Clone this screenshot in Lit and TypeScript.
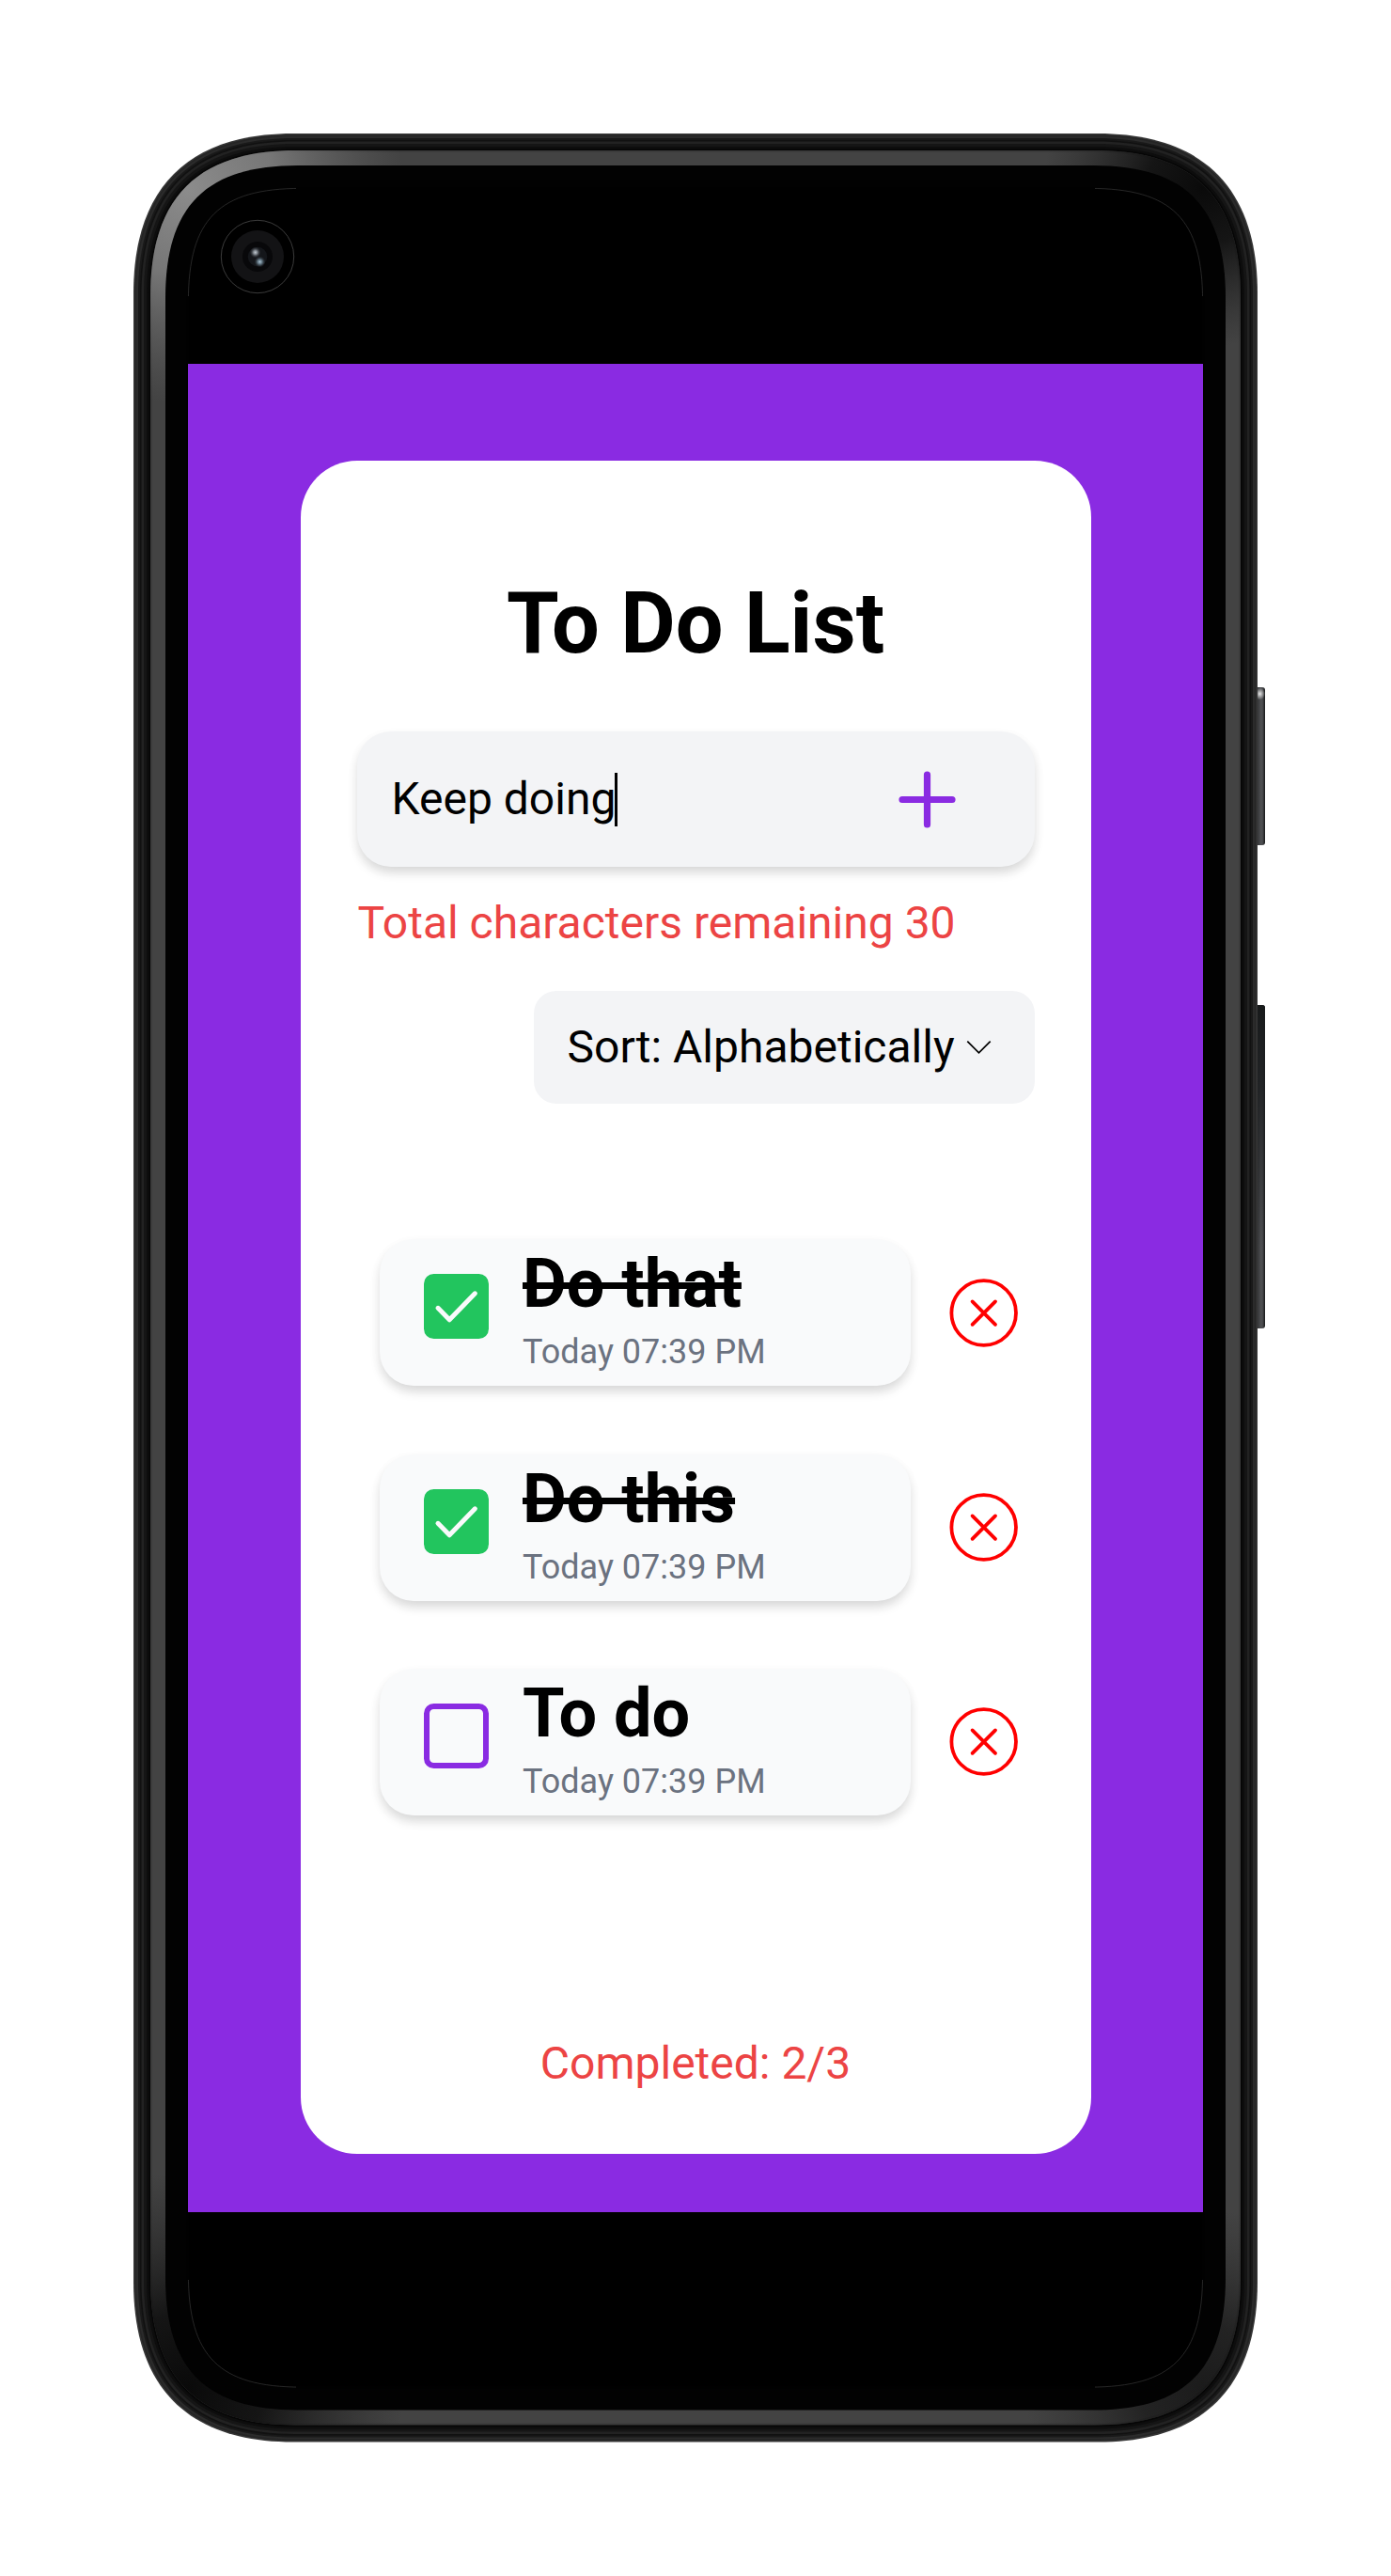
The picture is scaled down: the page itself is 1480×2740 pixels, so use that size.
import { LitElement, html, svg, css, nothing } from "lit";
import { customElement, property, state } from "lit/decorators.js";

/** Smooth-cornered outline of the phone body, inset by d pixels. */
function bodyPath(d: number): string {
  const x0 = 142 + d, y0 = 142 + d, x1 = 1338 - d, y1 = 2597.5 - d;
  const len = 170 - d * 0.85;
  const diagonal = 43 - d * 0.27;
  const k = (4 - (8 * diagonal) / len) / 3;
  const c = len * (1 - k);
  return `M${x0 + len} ${y0}H${x1 - len}C${x1 - c} ${y0} ${x1} ${y0 + c} ${x1} ${y0 + len}` +
    `V${y1 - len}C${x1} ${y1 - c} ${x1 - c} ${y1} ${x1 - len} ${y1}` +
    `H${x0 + len}C${x0 + c} ${y1} ${x0} ${y1 - c} ${x0} ${y1 - len}` +
    `V${y0 + len}C${x0} ${y0 + c} ${x0 + c} ${y0} ${x0 + len} ${y0}Z`;
}

const BANDS: [number, string][] = [
  [0, "#363636"], [1.5, "#252525"], [3, "#2b2b2b"], [5, "#191919"], [7, "#111111"],
  [8.5, "#222222"], [11, "#151515"], [14, "#0d0d0d"], [16.5, "#060606"],
];

@customElement("phone-frame")
export class PhoneFrame extends LitElement {
  static styles = css`
    :host { display: block; }
    .frame { display: block; width: 1480px; height: 2740px; }
  `;

  render() {
    return html`
      <svg class="frame" viewBox="0 0 1480 2740" aria-hidden="true">
        <defs>
          <linearGradient id="key" x1="0" x2="1" y1="0" y2="0">
            <stop offset="0" stop-color="#222324" /><stop offset=".4" stop-color="#3a3b3d" />
            <stop offset=".65" stop-color="#505154" /><stop offset=".8" stop-color="#46474a" />
            <stop offset="1" stop-color="#161718" />
          </linearGradient>
          <linearGradient id="keyShade" x1="0" x2="0" y1="0" y2="1">
            <stop offset="0" stop-color="#181a1b" /><stop offset=".25" stop-color="#1c1e20" stop-opacity=".85" />
            <stop offset=".75" stop-color="#1c1e20" stop-opacity="0" />
          </linearGradient>
          <radialGradient id="glint"><stop offset="0" stop-color="#e8e8e8" /><stop offset="1" stop-color="#e8e8e8" stop-opacity="0" /></radialGradient>
          <radialGradient id="light"><stop offset="0" stop-color="#8c8c8c" /><stop offset=".4" stop-color="#808080" stop-opacity=".85" /><stop offset="1" stop-color="#666" stop-opacity="0" /></radialGradient>
          <radialGradient id="dark"><stop offset="0" stop-color="#0a0a0a" /><stop offset=".35" stop-color="#0d0d0d" stop-opacity=".85" /><stop offset="1" stop-color="#222" stop-opacity="0" /></radialGradient>
          <radialGradient id="lensA"><stop offset="0" stop-color="#c4cbd2" /><stop offset=".35" stop-color="#8c939b" stop-opacity=".9" /><stop offset="1" stop-color="#30343a" stop-opacity="0" /></radialGradient>
          <radialGradient id="lensB"><stop offset="0" stop-color="#a9c0cf" /><stop offset=".4" stop-color="#6f8796" stop-opacity=".85" /><stop offset="1" stop-color="#30343a" stop-opacity="0" /></radialGradient>
          <clipPath id="ring"><path d=${bodyPath(18)} /></clipPath>
        </defs>
        <rect x="1334" y="731" width="12" height="168" rx="3" fill="url(#key)" />
        <ellipse cx="1340.5" cy="738" rx="5.5" ry="6.5" fill="url(#glint)" />
        <rect x="1334" y="1069" width="12" height="344" rx="3" fill="url(#key)" />
        <rect x="1334" y="1069" width="12" height="344" rx="3" fill="url(#keyShade)" />
        ${BANDS.map(([d, c]) => svg`<path d=${bodyPath(d)} fill=${c} />`)}
        <path d=${bodyPath(18)} fill="#3b3b3b" />
        <path d=${bodyPath(20)} fill="#434343" />
        <g clip-path="url(#ring)">
          <circle cx="200" cy="200" r="230" fill="url(#light)" />
          <circle cx="1280" cy="200" r="170" fill="url(#dark)" />
          <circle cx="200" cy="2540" r="230" fill="url(#dark)" />
          <circle cx="1280" cy="2540" r="190" fill="url(#dark)" opacity=".7" />
        </g>
        <path d=${bodyPath(34)} fill="#020202" />
        <path d=${bodyPath(58.4)} fill="#000" stroke="#404040" stroke-width=".6" />
        <path d="M200.3 315V2425M1279.7 315V2425M315 200.4H1165M315 2539.1H1165" stroke="#010101" stroke-width="3" />
        <g>
          <circle cx="274" cy="273" r="38.7" fill="#000" stroke="#555" stroke-width=".7" />
          <circle cx="274" cy="273" r="28" fill="#131315" />
          <circle cx="274" cy="273" r="16" fill="#08080a" />
          <circle cx="274" cy="273" r="10.3" fill="#14161a" />
          <circle cx="271.7" cy="268.5" r="6" fill="url(#lensA)" />
          <circle cx="276.5" cy="278.5" r="6" fill="url(#lensB)" />
        </g>
      </svg>
    `;
  }
}

@customElement("todo-item")
export class TodoItem extends LitElement {
  @property() label = "";
  @property() time = "";
  @property({ type: Boolean }) done = false;

  static styles = css`
    :host { display: flex; align-items: flex-end; gap: 41px; }
    .card {
      box-sizing: border-box; width: 565px; height: 156px; padding: 5px 48px 0 47.5px;
      display: flex; gap: 36px; border-radius: 36px; background: #f9fafb;
      box-shadow: 0 7px 12px -1px rgba(0, 0, 0, 0.14), 0 4px 14px rgba(0, 0, 0, 0.03);
    }
    .check { display: block; flex: none; width: 69px; height: 69px; margin-top: 32px; }
    .texts { display: flex; flex-direction: column; gap: 9px; margin-top: 1px; white-space: nowrap; }
    .label { font-size: 72px; line-height: 84px; font-weight: 700; color: #000; }
    .done { text-decoration: line-through; text-decoration-thickness: 7px; text-decoration-skip-ink: none; }
    .time { font-size: 36px; line-height: 42px; color: #6b7280; }
    .remove { display: block; width: 73px; height: 73px; margin-bottom: 41.5px; }
  `;

  render() {
    return html`
      <div class="card">
        <svg class="check" viewBox="0 0 69 69">
          ${this.done
            ? svg`<rect width="69" height="69" rx="10.5" fill="#22c55e" />
                <path d="M15 36.3L27.2 48.8L54.4 20.8" fill="none" stroke="#f9fafb" stroke-width="5" stroke-linecap="round" stroke-linejoin="round" />`
            : svg`<rect x="3" y="3" width="63" height="63" rx="7.5" fill="none" stroke="#8a2be2" stroke-width="6" />`}
        </svg>
        <div class="texts">
          <span class="label ${this.done ? "done" : ""}">${this.label}</span>
          <span class="time">${this.time}</span>
        </div>
      </div>
      <svg class="remove" viewBox="0 0 73 73">
        <g fill="none" stroke="#f00" stroke-width="3.8" stroke-linecap="round">
          <circle cx="36.7" cy="36.5" r="34.3" />
          <path d="M24.6 24.4L49 48.8M49 24.4L24.6 48.8" />
        </g>
      </svg>
    `;
  }
}

interface Todo { label: string; time: string; done: boolean; }

@customElement("app-root")
export class AppRoot extends LitElement {
  @state() private draft = "Keep doing";
  @state() private todos: Todo[] = [
    { label: "Do that", time: "Today 07:39 PM", done: true },
    { label: "Do this", time: "Today 07:39 PM", done: true },
    { label: "To do", time: "Today 07:39 PM", done: false },
  ];

  static styles = css`
    :host {
      display: grid; width: 1480px; height: 2740px; overflow: hidden; background: #fff;
      font-family: Roboto, "Liberation Sans", sans-serif; font-size: 48px; line-height: 56px; color: #000;
    }
    .frame, .screen { grid-area: 1 / 1; }
    .screen {
      box-sizing: border-box; width: 1080px; height: 1966px; margin: 387px 0 0 200px; padding-top: 103px;
      background: #8a2be2; display: flex; flex-direction: column; align-items: center; z-index: 1;
    }
    .panel {
      box-sizing: border-box; width: 841px; height: 1801px; padding: 120px 60px 0; border-radius: 60px;
      background: #fff; display: flex; flex-direction: column;
    }
    .title { margin: 0; text-align: center; font-size: 90px; line-height: 107px; font-weight: 700; }
    .entry {
      box-sizing: border-box; height: 144px; margin-top: 61px; padding: 0 84px 0 37px; border-radius: 36px;
      display: flex; align-items: center; background: #f3f4f6; white-space: pre;
      box-shadow: 0 7px 12px -1px rgba(0, 0, 0, 0.14), 0 4px 14px rgba(0, 0, 0, 0.03);
    }
    .caret { width: 3px; height: 57px; margin-left: -1px; background: #000; }
    .add { display: block; width: 61px; height: 61px; margin-left: auto; }
    .remaining { margin: 32px 0 0 1px; color: #ec4444; }
    .sort {
      box-sizing: border-box; align-self: flex-end; width: 533px; height: 120px; margin-top: 44px; padding-left: 36px;
      display: flex; align-items: center; gap: 12px; border-radius: 24px; background: #f3f4f6; white-space: nowrap;
    }
    .chevron { display: block; width: 27px; height: 16px; }
    .list { display: flex; flex-direction: column; gap: 72.2px; margin: 144.4px 0 0 24px; }
    .completed { margin-top: 236.5px; text-align: center; color: #ec4444; }
  `;

  render() {
    const finished = this.todos.filter((t) => t.done).length;
    return html`
      <phone-frame class="frame"></phone-frame>
      <main class="screen">
        <section class="panel">
          <h1 class="title">To Do List</h1>
          <div class="entry">
            <span>${this.draft}</span><span class="caret"></span>
            <svg class="add" viewBox="0 0 61 61">
              <path d="M30.5 4V57M4 30.5H57" stroke="#8a2be2" stroke-width="7.2" stroke-linecap="round" />
            </svg>
          </div>
          <div class="remaining">Total characters remaining ${40 - this.draft.length}</div>
          <div class="sort">
            <span>Sort: Alphabetically</span>
            <svg class="chevron" viewBox="0 0 27 16">
              <path d="M1.3 1.6L13.5 13.9L25.7 1.6" fill="none" stroke="#000" stroke-width="1.7" />
            </svg>
          </div>
          <div class="list">
            ${this.todos.map((t) => html`<todo-item .label=${t.label} .time=${t.time} .done=${t.done}></todo-item>`)}
          </div>
          ${this.todos.length ? html`<div class="completed">Completed: ${finished}/${this.todos.length}</div>` : nothing}
        </section>
      </main>
    `;
  }
}
